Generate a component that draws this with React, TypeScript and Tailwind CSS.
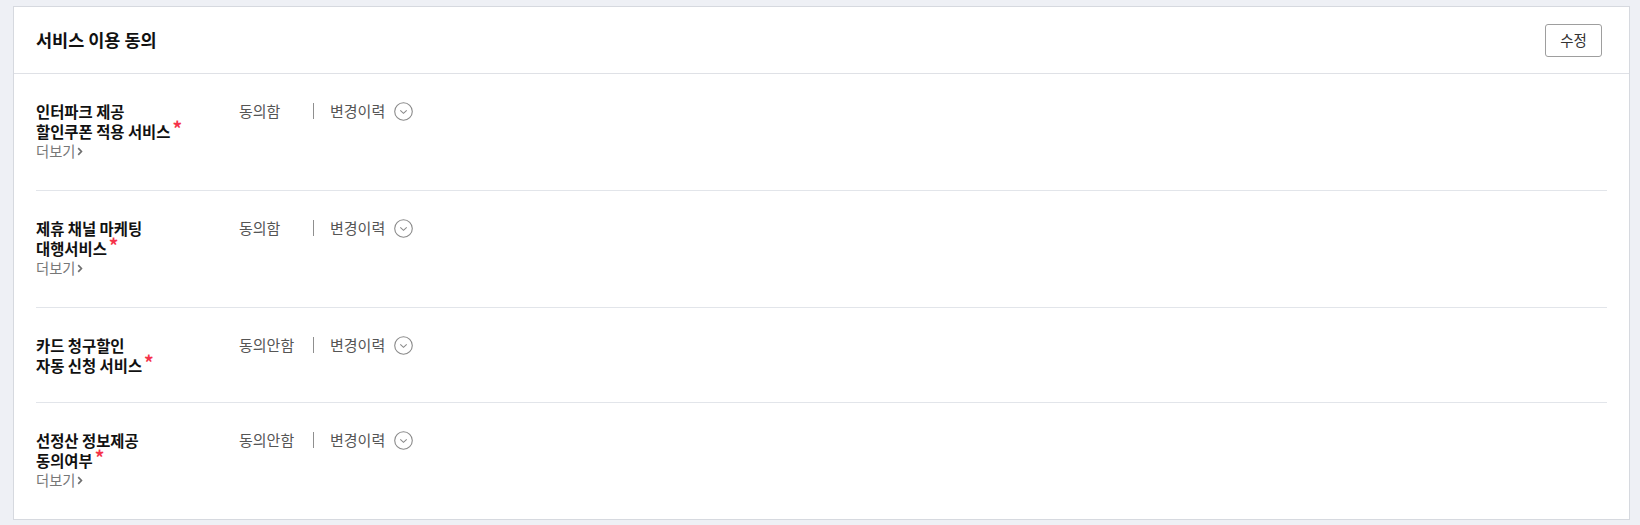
import React from "react";

type Item = { lines: string[]; status: string; more: boolean };

const items: Item[] = [
  { lines: ["인터파크 제공", "할인쿠폰 적용 서비스"], status: "동의함", more: true },
  { lines: ["제휴 채널 마케팅", "대행서비스"], status: "동의함", more: true },
  { lines: ["카드 청구할인", "자동 신청 서비스"], status: "동의안함", more: false },
  { lines: ["선정산 정보제공", "동의여부"], status: "동의안함", more: true },
];

function CircleChevron() {
  return (
    <svg width="19" height="19" viewBox="0 0 19 19" fill="none">
      <circle cx="9.5" cy="9.5" r="8.8" stroke="#8a8a8a" strokeWidth="1.1" />
      <polyline points="6.3,8.3 9.5,11.3 12.7,8.3" stroke="#8a8a8a" strokeWidth="1.1" fill="none" />
    </svg>
  );
}

function SmallChevron() {
  return (
    <svg width="6" height="9" viewBox="0 0 6 9" fill="none" className="ml-[2px] mt-[1px]">
      <polyline points="1.2,1.2 4.4,4.5 1.2,7.8" stroke="#6f6f6f" strokeWidth="1.7" fill="none" />
    </svg>
  );
}

export default function App() {
  return (
    <div
      className="min-h-[525px] w-[1640px] bg-[#eef0f5] pt-[6px]"
      style={{ fontFamily: '"Noto Sans CJK KR", "Noto Sans", sans-serif' }}
    >
      <div className="ml-[13px] w-[1617px] border border-[#d6d9df] bg-white">
        <div className="flex h-[67px] items-center justify-between border-b border-[#dfe1e6] pl-[22px] pr-[27px]">
          <div className="text-[17.5px] font-bold leading-[22px] text-[#111]">서비스 이용 동의</div>
          <button className="flex h-[33px] w-[57px] items-center justify-center rounded-[3px] border border-[#9e9e9e] bg-white text-[14.5px] text-[#333]">
            수정
          </button>
        </div>
        <div className="px-[22px]">
          {items.map((it, i) => (
            <div
              key={i}
              className={
                "flex pt-[27px] pb-[27px] " +
                (i < items.length - 1 ? "border-b border-[#e2e5ea]" : "")
              }
            >
              <div className="w-[203px] shrink-0">
                <div className="text-[15.4px] font-bold leading-[20px] text-[#111]">
                  <div>{it.lines[0]}</div>
                  <div className="flex items-start">
                    <span>{it.lines[1]}</span>
                    <span className="ml-[2px] block h-[11px] overflow-visible text-[19px] font-bold leading-[13px] text-[#f5334a]">
                      *
                    </span>
                  </div>
                </div>
                {it.more && (
                  <div className="mb-[2px] flex h-[20px] items-center text-[14.3px] leading-[20px] text-[#777]">
                    <span>더보기</span>
                    <SmallChevron />
                  </div>
                )}
              </div>
              <div className="flex h-[20px] items-center text-[15px] text-[#555]">
                <span className="w-[74px]">{it.status}</span>
                <span className="h-[16px] w-px bg-[#8f8f8f]" />
                <span className="ml-[16px]">변경이력</span>
                <span className="ml-[9px] flex items-center">
                  <CircleChevron />
                </span>
              </div>
            </div>
          ))}
        </div>
      </div>
    </div>
  );
}
